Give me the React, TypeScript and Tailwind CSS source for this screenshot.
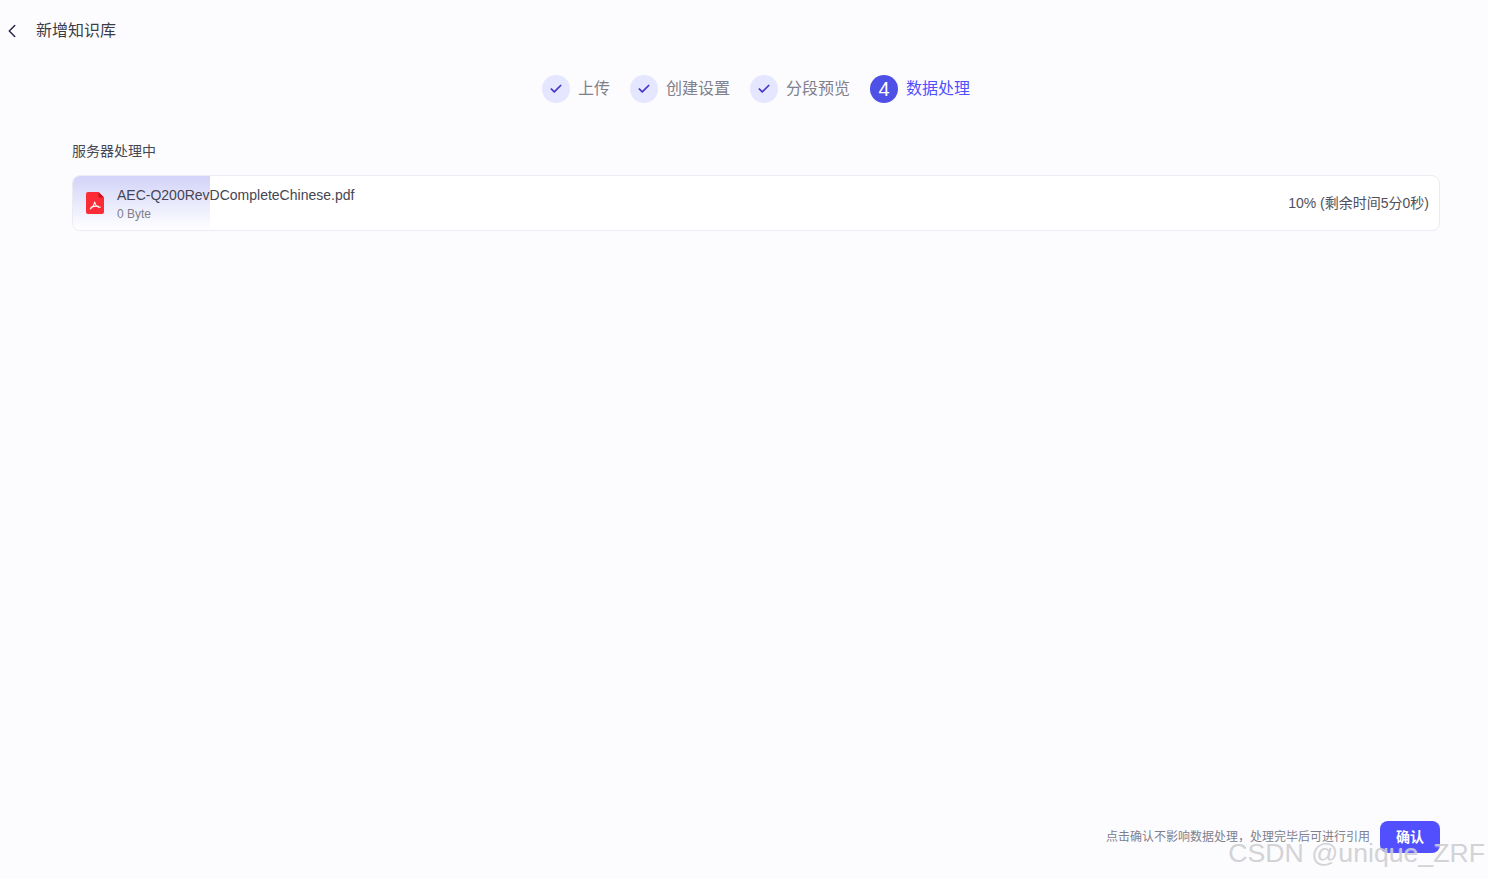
import { Check, ChevronLeft } from 'lucide-react';

const FONT = "font-['Liberation_Sans','Noto_Sans_CJK_SC',sans-serif]";

const STEPS = [
  { label: '上传', width: 'w-[32px]' },
  { label: '创建设置', width: 'w-[64px]' },
  { label: '分段预览', width: 'w-[64px]' },
];

function PdfIcon() {
  return (
    <svg width="18" height="22" viewBox="0 0 18 22" className="shrink-0">
      <path d="M2 0h10.500L18 5.500V20a2 2 0 0 1-2 2H2a2 2 0 0 1-2-2V2a2 2 0 0 1 2-2z" fill="#fb2c36" />
      <path d="M12.500 0L18 5.500h-4a1.500 1.500 0 0 1-1.500-1.500z" fill="#c9101c" />
      <path
        d="M8.600 10c.5 2.200 1.500 3.700 3.100 4.700.9.500 2 .6 2.600.3M8.600 10c-.3 2.600-2 5.200-4.300 6.900M5 15.300c2.300-1 5-1.400 7.600-1.100"
        fill="none"
        stroke="#fff"
        strokeWidth="1.100"
        strokeLinecap="round"
      />
    </svg>
  );
}

export default function App() {
  return (
    <div className={`${FONT} relative flex h-screen flex-col overflow-hidden bg-[#fcfcff]`}>
      {/* Header */}
      <div className="flex h-[61px] shrink-0 items-center">
        <ChevronLeft className="ml-[1px] h-[22px] w-[22px] text-[#26244a]" strokeWidth={1.6} />
        <span className="ml-[13px] text-base text-[#3d3d48]">新增知识库</span>
      </div>

      <div className="flex flex-1 flex-col pl-[72px] pr-[48px]">
        {/* Steps */}
        <div className="mt-[14px] flex items-center justify-center gap-5">
          {STEPS.map((step) => (
            <div key={step.label} className="flex items-center gap-2">
              <div className="flex h-7 w-7 items-center justify-center rounded-full bg-[#e5e6ff]">
                <Check className="h-[14px] w-[14px] text-[#4338ca]" strokeWidth={3} />
              </div>
              <span className={`${step.width} text-base text-[#80808c]`}>{step.label}</span>
            </div>
          ))}
          <div className="flex items-center gap-2">
            <div className="flex h-7 w-7 items-center justify-center rounded-full bg-[#4f50e6] text-xl text-white">
              4
            </div>
            <span className="text-base text-[#524fff]">数据处理</span>
          </div>
        </div>

        <div className="mt-[38px] text-sm leading-[20px] text-[#484852]">服务器处理中</div>

        {/* File row */}
        <div className="relative mt-[14px] flex h-[56px] items-center overflow-hidden rounded-[8px] border border-[#ebebf3] bg-white">
          <div className="absolute inset-y-0 left-0 w-[10%] bg-gradient-to-b from-[#d2d3f8] to-white" />
          <div className="relative ml-[13px] flex flex-1 items-center">
            <PdfIcon />
            <div className="ml-[13px] mt-[2px]">
              <div className="text-sm leading-[20px] text-[#454553]">AEC-Q200RevDCompleteChinese.pdf</div>
              <div className="text-xs leading-[18px] text-[#80808c]">0 Byte</div>
            </div>
          </div>
          <span className="relative mr-[10px] text-sm text-[#50505c]">10% (剩余时间5分0秒)</span>
        </div>

        <div className="flex-1" />

        {/* Footer */}
        <div className="mb-[26px] flex items-center justify-end gap-[10px]">
          <span className="text-xs text-[#80808c]">点击确认不影响数据处理，处理完毕后可进行引用</span>
          <button className="h-8 w-[60px] rounded-[8px] bg-[#524fff] text-sm font-bold text-white">确认</button>
        </div>
      </div>

      {/* Watermark */}
      <div className="pointer-events-none absolute bottom-[9px] right-[3px] text-[26.67px] leading-[34px] text-[#cfcfd2] opacity-90 [text-shadow:0_1px_2px_rgba(255,255,255,0.6)]">
        CSDN @unique_ZRF
      </div>
    </div>
  );
}
